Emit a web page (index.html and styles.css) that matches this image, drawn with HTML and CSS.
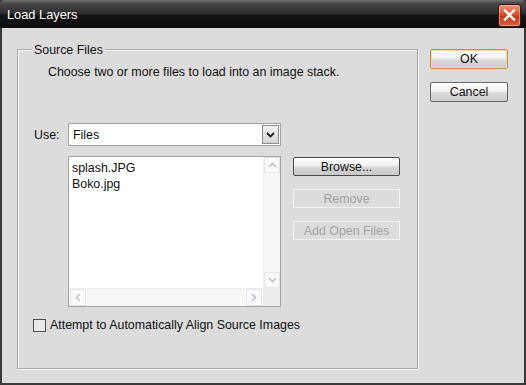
FILE: index.html
```html
<!DOCTYPE html>
<html>
<head>
<meta charset="utf-8">
<link rel="stylesheet" href="styles.css">
</head>
<body>
<div class="window">
  <div class="titlebar">
    <span class="title">Load Layers</span>
    <div class="close">
      <svg width="13" height="12" viewBox="0 0 13 12"><path d="M2 1.5 L11 10.5 M11 1.5 L2 10.5" stroke="#fff" stroke-width="2.4" stroke-linecap="square"/></svg>
    </div>
  </div>
  <div class="body">
    <div class="group">
      <span class="group-title">Source Files</span>
      <div class="hint">Choose two or more files to load into an image stack.</div>
      <div class="use-row">
        <span class="use-label">Use:</span>
        <div class="select">
          <span class="select-value">Files</span>
          <div class="select-btn">
            <svg width="9" height="6" viewBox="0 0 9 6"><path d="M1 1 L4.5 4.5 L8 1" fill="none" stroke="#222" stroke-width="1.8"/></svg>
          </div>
        </div>
      </div>
      <div class="list-row">
        <div class="listbox">
          <div class="list-main">
            <div class="items">
              <div class="item">splash.JPG</div>
              <div class="item">Boko.jpg</div>
            </div>
            <div class="vscroll">
              <div class="sb-btn"><svg width="9" height="6" viewBox="0 0 9 6"><path d="M1 5 L4.5 1.5 L8 5" fill="none" stroke="#bcc3d2" stroke-width="1.6"/></svg></div>
              <div class="sb-btn"><svg width="9" height="6" viewBox="0 0 9 6"><path d="M1 1 L4.5 4.5 L8 1" fill="none" stroke="#bcc3d2" stroke-width="1.6"/></svg></div>
            </div>
          </div>
          <div class="hscroll">
            <div class="sb-btn"><svg width="6" height="9" viewBox="0 0 6 9"><path d="M5 1 L1.5 4.5 L5 8" fill="none" stroke="#bcc3d2" stroke-width="1.6"/></svg></div>
            <div class="sb-track"></div>
            <div class="sb-btn"><svg width="6" height="9" viewBox="0 0 6 9"><path d="M1 1 L4.5 4.5 L1 8" fill="none" stroke="#bcc3d2" stroke-width="1.6"/></svg></div>
            <div class="sb-corner"></div>
          </div>
        </div>
        <div class="list-buttons">
          <div class="btn btn-dark">Browse...</div>
          <div class="btn btn-disabled">Remove</div>
          <div class="btn btn-disabled">Add Open Files</div>
        </div>
      </div>
      <div class="check-row">
        <span class="checkbox"></span>
        <span class="check-label">Attempt to Automatically Align Source Images</span>
      </div>
    </div>
    <div class="side">
      <div class="btn btn-default">OK</div>
      <div class="btn btn-cancel">Cancel</div>
    </div>
  </div>
</div>
</body>
</html>
```

FILE: styles.css
```css
html, body {
  margin: 0;
  padding: 0;
}
body {
  width: 526px;
  height: 385px;
  overflow: hidden;
  font-family: "Liberation Sans", Arial, sans-serif;
  font-size: 12.4px;
  color: #111;
}
.window {
  width: 526px;
  height: 385px;
  display: flex;
  flex-direction: column;
  background: #3a3a3a;
}
.titlebar {
  height: 28px;
  flex: none;
  display: flex;
  align-items: center;
  justify-content: space-between;
  padding: 0 5px 0 7px;
  background: linear-gradient(#747474 0px, #4a4a4a 3px, #2c2c2c 14px, #131313 15px, #0e0e0e 28px);
  border-radius: 5px 5px 0 0;
}
.title {
  color: #fff;
  font-size: 12.8px;
  padding-top: 1px;
}
.close {
  width: 21px;
  height: 21px;
  margin-top: 2px;
  border: 1px solid #3a1a14;
  border-radius: 3px;
  background: linear-gradient(#f0977a, #d9502e 45%, #c33a1a 55%, #d4603c);
  display: flex;
  align-items: center;
  justify-content: center;
  box-shadow: inset 0 0 0 1px rgba(255,200,180,0.5);
}
.body {
  flex: 1;
  display: flex;
  align-items: flex-start;
  background: #dcdcdc;
  margin: 0 2px 2px 2px;
  padding: 21px 0 0 15px;
}
.group {
  width: 401px;
  height: 320px;
  box-sizing: border-box;
  border: 1px solid #a9a9a9;
  box-shadow: inset 1px 1px 0 #f8f8f8, 1px 1px 0 #f8f8f8;
  display: flex;
  flex-direction: column;
  align-items: flex-start;
  padding-left: 16px;
}
.group-title {
  line-height: 14px;
  margin-top: -7px;
  margin-left: -2px;
  padding: 0 2px;
  background: #dcdcdc;
}
.hint {
  line-height: 14px;
  margin-top: 8px;
  margin-left: 14px;
}
.use-row {
  display: flex;
  align-items: center;
  margin-top: 44px;
}
.use-label {
  width: 34px;
}
.select {
  width: 213px;
  height: 23px;
  box-sizing: border-box;
  border: 1px solid #a4a4a4;
  background: #fff;
  display: flex;
  align-items: center;
  justify-content: space-between;
  padding: 0 1px 0 4px;
}
.select-value {
  padding-top: 1px;
}
.select-btn {
  width: 15px;
  height: 17px;
  border: 1px solid #8c8c8c;
  background: linear-gradient(#f0f0f0, #d8d8d8);
  display: flex;
  align-items: center;
  justify-content: center;
}
.list-row {
  display: flex;
  align-items: flex-start;
  margin-top: 10px;
  margin-left: 34px;
}
.listbox {
  width: 213px;
  height: 151px;
  box-sizing: border-box;
  border: 1px solid #a4a4a4;
  background: #fff;
  display: flex;
  flex-direction: column;
}
.list-main {
  flex: 1;
  display: flex;
}
.items {
  flex: 1;
  padding: 3px 0 0 3px;
}
.item {
  line-height: 16px;
}
.vscroll {
  width: 16px;
  background: #f7f7f7;
  display: flex;
  flex-direction: column;
  justify-content: space-between;
  border-left: 1px solid #f0f0f0;
}
.sb-btn {
  width: 16px;
  height: 16px;
  box-sizing: border-box;
  border: 1px solid #e6e6e6;
  background: #fafafa;
  display: flex;
  align-items: center;
  justify-content: center;
}
.hscroll {
  height: 17px;
  display: flex;
  background: #f7f7f7;
  border-top: 1px solid #eeeeee;
}
.hscroll .sb-btn {
  height: 17px;
  margin-left: 1px;
}
.sb-track {
  flex: 1;
}
.sb-corner {
  width: 17px;
  background: #ececec;
  margin-left: 1px;
}
.list-buttons {
  display: flex;
  flex-direction: column;
  gap: 13px;
  margin-left: 12px;
  margin-top: 1px;
}
.btn {
  width: 107px;
  height: 19px;
  box-sizing: border-box;
  display: flex;
  align-items: center;
  justify-content: center;
  font-size: 12.4px;
}
.btn-dark {
  border: 1px solid #4a4a4a;
  border-radius: 2px;
  background: linear-gradient(#ffffff, #f0f0f0 45%, #d6d6d6 55%, #c8c8c8);
}
.btn-disabled {
  border: 1px solid #f4f4f4;
  color: #a2a2a2;
  background: #dcdcdc;
}
.check-row {
  display: flex;
  align-items: center;
  margin-top: 12px;
  margin-left: -1px;
}
.checkbox {
  width: 13px;
  height: 13px;
  box-sizing: border-box;
  border: 1px solid #4c4c4c;
  background: #e9e9e9;
  margin-right: 4px;
}
.check-label {
  line-height: 13px;
}
.side {
  display: flex;
  flex-direction: column;
  gap: 13px;
  margin-left: 12px;
}
.side .btn {
  width: 78px;
  height: 20px;
}
.btn-default {
  border: 1px solid #c8903a;
  border-radius: 2px;
  background: linear-gradient(#ffffff, #f2f2f2 45%, #dadada 55%, #cdcdcd);
  box-shadow: inset 0 0 0 1px #f3d9a8;
}
.btn-cancel {
  border: 1px solid #666;
  border-radius: 2px;
  background: linear-gradient(#ffffff, #f2f2f2 45%, #dadada 55%, #cdcdcd);
}
```
